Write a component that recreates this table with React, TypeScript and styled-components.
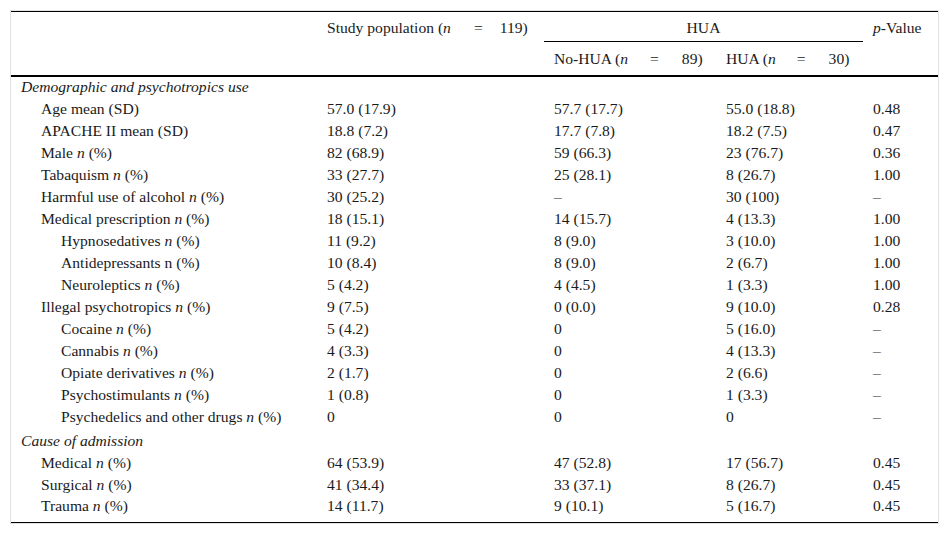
import React from 'react';
import styled, { createGlobalStyle } from 'styled-components';

const GlobalStyle = createGlobalStyle`
  body {
    margin: 0;
    background: #fff;
    font-family: 'Liberation Serif', 'Times New Roman', serif;
    color: #1a1a1a;
  }
`;

const Frame = styled.div`
  margin: 10px;
  width: 927px;
  border: 1px solid #e2e2e2;
  background: #fff;
`;

const Table = styled.table`
  width: 927px;
  border-collapse: collapse;
  table-layout: fixed;
  font-size: 15.6px;
  line-height: 18px;
  border-top: 1px solid #000;
  border-bottom: 1px solid #000;
`;

const HeadCell = styled.th<{ $center?: boolean; $rule?: boolean; $h: number }>`
  font-weight: normal;
  text-align: ${(p) => (p.$center ? 'center' : 'left')};
  vertical-align: top;
  padding: ${(p) => (p.$h === 30 ? '7px' : '8px')} 10px 0 10px;
  height: ${(p) => p.$h}px;
  box-sizing: border-box;
  white-space: nowrap;
  border-bottom: ${(p) => (p.$rule ? '1px solid #000' : 'none')};
`;

const HeadRow = styled.tr<{ $last?: boolean }>`
  border-bottom: ${(p) => (p.$last ? '2px solid #000' : 'none')};
`;

const Row = styled.tr<{ $gap?: boolean; $tail?: boolean }>`
  height: ${(p) => 22 + (p.$gap ? 2 : 0) + (p.$tail ? 5 : 0)}px;
  & > td {
    padding-top: ${(p) => (p.$gap ? '2px' : '0')};
    padding-bottom: ${(p) => (p.$tail ? '5px' : '0')};
  }
`;

const Cell = styled.td<{ $indent?: number }>`
  padding-left: ${(p) => 10 + (p.$indent ?? 0) * 20}px;
  padding-right: 4px;
  vertical-align: middle;
  white-space: nowrap;
  box-sizing: border-box;
`;

const Section = styled.td`
  padding-left: 10px;
  font-style: italic;
  vertical-align: middle;
`;

const I = styled.i`
  font-style: italic;
`;

const Eq = styled.span<{ $l: number; $r: number }>`
  margin-left: ${(p) => p.$l}px;
  margin-right: ${(p) => p.$r}px;
`;

type Line = {
  label: string;
  italicN?: boolean;
  indent: number;
  vals: string[];
};

const demographic: Line[] = [
  { label: 'Age mean (SD)', indent: 1, vals: ['57.0 (17.9)', '57.7 (17.7)', '55.0 (18.8)', '0.48'] },
  { label: 'APACHE II mean (SD)', indent: 1, vals: ['18.8 (7.2)', '17.7 (7.8)', '18.2 (7.5)', '0.47'] },
  { label: 'Male', italicN: true, indent: 1, vals: ['82 (68.9)', '59 (66.3)', '23 (76.7)', '0.36'] },
  { label: 'Tabaquism', italicN: true, indent: 1, vals: ['33 (27.7)', '25 (28.1)', '8 (26.7)', '1.00'] },
  { label: 'Harmful use of alcohol', italicN: true, indent: 1, vals: ['30 (25.2)', '–', '30 (100)', '–'] },
  { label: 'Medical prescription', italicN: true, indent: 1, vals: ['18 (15.1)', '14 (15.7)', '4 (13.3)', '1.00'] },
  { label: 'Hypnosedatives', italicN: true, indent: 2, vals: ['11 (9.2)', '8 (9.0)', '3 (10.0)', '1.00'] },
  { label: 'Antidepressants n (%)', indent: 2, vals: ['10 (8.4)', '8 (9.0)', '2 (6.7)', '1.00'] },
  { label: 'Neuroleptics', italicN: true, indent: 2, vals: ['5 (4.2)', '4 (4.5)', '1 (3.3)', '1.00'] },
  { label: 'Illegal psychotropics', italicN: true, indent: 1, vals: ['9 (7.5)', '0 (0.0)', '9 (10.0)', '0.28'] },
  { label: 'Cocaine', italicN: true, indent: 2, vals: ['5 (4.2)', '0', '5 (16.0)', '–'] },
  { label: 'Cannabis', italicN: true, indent: 2, vals: ['4 (3.3)', '0', '4 (13.3)', '–'] },
  { label: 'Opiate derivatives', italicN: true, indent: 2, vals: ['2 (1.7)', '0', '2 (6.6)', '–'] },
  { label: 'Psychostimulants', italicN: true, indent: 2, vals: ['1 (0.8)', '0', '1 (3.3)', '–'] },
  { label: 'Psychedelics and other drugs', italicN: true, indent: 2, vals: ['0', '0', '0', '–'] },
];

const admission: Line[] = [
  { label: 'Medical', italicN: true, indent: 1, vals: ['64 (53.9)', '47 (52.8)', '17 (56.7)', '0.45'] },
  { label: 'Surgical', italicN: true, indent: 1, vals: ['41 (34.4)', '33 (37.1)', '8 (26.7)', '0.45'] },
  { label: 'Trauma', italicN: true, indent: 1, vals: ['14 (11.7)', '9 (10.1)', '5 (16.7)', '0.45'] },
];

function DataRow({ line, tail }: { line: Line; tail?: boolean }) {
  return (
    <Row $tail={tail}>
      <Cell $indent={line.indent}>
        {line.label}
        {line.italicN && (
          <>
            {' '}
            <I>n</I> (%)
          </>
        )}
      </Cell>
      {line.vals.map((v, i) => (
        <Cell key={i}>{v}</Cell>
      ))}
    </Row>
  );
}

export default function App() {
  return (
    <>
      <GlobalStyle />
      <Frame>
        <Table>
          <colgroup>
            <col style={{ width: 306 }} />
            <col style={{ width: 227 }} />
            <col style={{ width: 172 }} />
            <col style={{ width: 147 }} />
            <col style={{ width: 75 }} />
          </colgroup>
          <thead>
            <HeadRow>
              <HeadCell $h={30} rowSpan={2} />
              <HeadCell $h={30} rowSpan={2}>
                Study population (<I>n</I>
                <Eq $l={23} $r={17}>=</Eq>119)
              </HeadCell>
              <HeadCell $h={30} colSpan={2} $center $rule>
                HUA
              </HeadCell>
              <HeadCell $h={30} rowSpan={2}>
                <I>p</I>-Value
              </HeadCell>
            </HeadRow>
            <HeadRow $last>
              <HeadCell $h={34}>
                No-HUA (<I>n</I>
                <Eq $l={22} $r={23}>=</Eq>89)
              </HeadCell>
              <HeadCell $h={34}>
                HUA (<I>n</I>
                <Eq $l={21} $r={23}>=</Eq>30)
              </HeadCell>
            </HeadRow>
          </thead>
          <tbody>
            <Row>
              <Section colSpan={5}>Demographic and psychotropics use</Section>
            </Row>
            {demographic.map((l) => (
              <DataRow key={l.label} line={l} />
            ))}
            <Row $gap>
              <Section colSpan={5}>Cause of admission</Section>
            </Row>
            {admission.map((l, i) => (
              <DataRow key={l.label} line={l} tail={i === admission.length - 1} />
            ))}
          </tbody>
        </Table>
      </Frame>
    </>
  );
}
